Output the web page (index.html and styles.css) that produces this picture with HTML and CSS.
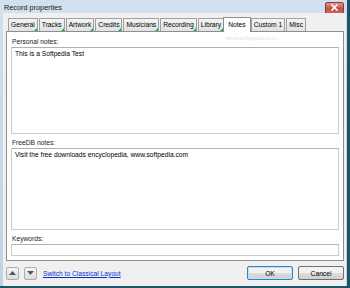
FILE: index.html
```html
<!DOCTYPE html>
<html lang="en">
<head>
  <meta charset="UTF-8" />
  <title>Record properties</title>
  <link rel="stylesheet" href="styles.css">
</head>
<body>
  <div class="window">
    <div class="titlebar">
      <span class="title">Record properties</span>
      <div class="close-btn">
        <svg width="9" height="7" viewBox="0 0 9 7"><path d="M1.5 0.5 L7.5 6.5 M7.5 0.5 L1.5 6.5" stroke="#fff" stroke-width="1.6"/></svg>
      </div>
    </div>
    <div class="client">
      <div class="tabs">
        <div class="tab marked">General</div>
        <div class="tab marked">Tracks</div>
        <div class="tab marked">Artwork</div>
        <div class="tab marked">Credits</div>
        <div class="tab marked">Musicians</div>
        <div class="tab marked">Recording</div>
        <div class="tab marked">Library</div>
        <div class="tab active">Notes</div>
        <div class="tab">Custom 1</div>
        <div class="tab">Misc</div>
      </div>
      <div class="panel">
        <span class="watermark">www.softpedia.com</span>
        <label class="field-label">Personal notes:</label>
        <div class="textbox personal">This is a Softpedia Test</div>
        <label class="field-label">FreeDB notes:</label>
        <div class="textbox freedb">Visit the free downloads encyclopedia, www.softpedia.com</div>
        <label class="field-label">Keywords:</label>
        <div class="textbox keywords"></div>
      </div>
      <div class="footer">
        <div class="arrow-btn">
          <svg width="7" height="4" viewBox="0 0 7 4"><path d="M0 4 L3.5 0 L7 4 Z" fill="#555"/></svg>
        </div>
        <div class="arrow-btn">
          <svg width="7" height="4" viewBox="0 0 7 4"><path d="M0 0 L3.5 4 L7 0 Z" fill="#555"/></svg>
        </div>
        <a class="layout-link" href="#">Switch to Classical Layout</a>
        <div class="spacer"></div>
        <button class="btn default">OK</button>
        <button class="btn">Cancel</button>
      </div>
    </div>
  </div>
</body>
</html>
```

FILE: styles.css
```css
body {
  margin: 0;
  padding: 0;
  font-family: 'Liberation Sans', Arial, sans-serif;
  font-size: 6.7px;
  color: #000;
  background: #1d5568;
}
.window {
  width: 347px;
  height: 286px;
  display: flex;
  flex-direction: column;
  background: linear-gradient(#d2e0ef, #bfd2e7);
  border-right: 3px solid #1d5568;
  border-bottom: 2px solid #1d5568;
}
.titlebar {
  height: 13px;
  display: flex;
  align-items: center;
  padding-left: 4px;
  padding-right: 3px;
}
.title {
  flex: 1;
  font-size: 7.3px;
  color: #1a1a1a;
  padding-top: 1px;
}
.close-btn {
  width: 17px;
  height: 10px;
  margin-top: 2px;
  border-radius: 2px;
  border: 1px solid #8a3b36;
  background: linear-gradient(#e19b8f, #c55045 55%, #c9655a);
  display: flex;
  align-items: center;
  justify-content: center;
}
.client {
  flex: 1;
  margin: 0 1px 0 3px;
  background: #f0f0f0;
  display: flex;
  flex-direction: column;
  padding-top: 4px;
  padding-left: 3px;
  padding-right: 2px;
}
.tabs {
  display: flex;
  align-items: flex-end;
  padding-left: 2px;
  height: 14px;
  gap: 1px;
}
.tab {
  position: relative;
  height: 12px;
  line-height: 12px;
  padding: 0 2px;
  border: 1px solid #a0a0a0;
  border-bottom: none;
  background: linear-gradient(#f4f4f4, #e2e2e2);
  white-space: nowrap;
}
.tab.marked::after {
  content: "";
  position: absolute;
  right: 0;
  bottom: 0;
  border-style: solid;
  border-width: 0 0 3px 3px;
  border-color: transparent transparent #22b422 transparent;
}
.tab.active {
  height: 14px;
  line-height: 13px;
  padding: 0 4px;
  background: #fff;
  margin: 0 -1px -1px -2px;
  z-index: 1;
  border-color: #8d8d8d;
}
.panel {
  position: relative;
  height: 230px;
  box-sizing: border-box;
  border: 1px solid #8d8d8d;
  background: #fff;
  display: flex;
  flex-direction: column;
  padding: 5px 4px 0 4px;
}
.watermark {
  position: absolute;
  top: 3px;
  left: 218px;
  font-size: 6px;
  color: #e4e4e4;
}
.field-label {
  height: 9px;
  line-height: 9px;
  color: #222;
  padding-left: 1px;
}
.textbox {
  box-sizing: border-box;
  border: 1px solid #cbcbcb;
  border-top-color: #b0b0b0;
  padding: 2px 3px;
  margin-bottom: 4px;
  margin-top: 1px;
  white-space: nowrap;
}
.textbox.personal {
  height: 87px;
}
.textbox.freedb {
  height: 83px;
}
.textbox.keywords {
  height: 12px;
}
.footer {
  display: flex;
  align-items: center;
  height: 24px;
  padding-right: 0;
}
.arrow-btn {
  width: 13px;
  height: 13px;
  box-sizing: border-box;
  border: 1px solid #adadad;
  border-radius: 2px;
  background: linear-gradient(#f5f5f5, #dcdcdc);
  display: flex;
  align-items: center;
  justify-content: center;
  margin-right: 5px;
}
.layout-link {
  margin-left: 1px;
  color: #0033cc;
  text-decoration: underline;
}
.spacer {
  flex: 1;
}
.btn {
  font-family: inherit;
  font-size: 6.7px;
  width: 46px;
  height: 14px;
  padding: 0;
  margin-left: 5px;
  border: 1px solid #707070;
  border-radius: 2px;
  background: linear-gradient(#f2f2f2 50%, #dddddd 50%, #cfcfcf);
  color: #000;
}
.btn.default {
  border-color: #3c7fb1;
  box-shadow: inset 0 0 0 1px #b6e2fa;
}
```
